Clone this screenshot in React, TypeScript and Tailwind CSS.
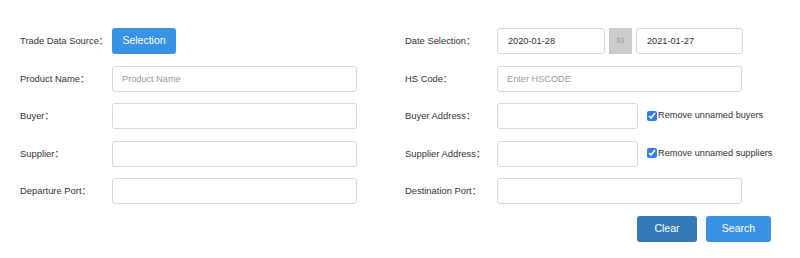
import React from 'react';

const inputCls =
  'h-[26px] rounded-[3px] border border-[#d9d9d9] bg-white px-[9px] text-[9.2px] text-[#333] placeholder:text-[#999] outline-none';

function Label({ text }: { text: string }) {
  return (
    <span className="w-[92px] shrink-0 text-[9.4px] text-[#333]">
      {text}
      <span className="font-['Noto_Sans_CJK_SC',sans-serif]">：</span>
    </span>
  );
}

function Row({ children }: { children: React.ReactNode }) {
  return <div className="flex items-center h-[26px]">{children}</div>;
}

export default function App() {
  return (
    <div className="w-[800px] h-[258px] bg-white pt-[28px] pl-[20px] font-['Liberation_Sans',Arial,sans-serif]">
      <div className="grid grid-cols-[385px_1fr] gap-y-[11.5px]">
        {/* Row 1 */}
        <Row>
          <Label text="Trade Data Source" />
          <button className="h-[26px] w-[64px] rounded-[3px] bg-[#3a92e4] text-[10.5px] text-white">
            Selection
          </button>
        </Row>
        <Row>
          <Label text="Date Selection" />
          <input className={`${inputCls} w-[108px] pl-[10px]`} defaultValue="2020-01-28" />
          <div className="ml-[4px] flex h-[26px] w-[23px] items-center justify-center bg-[#cccccc] text-[9px] text-[#999]">
            to
          </div>
          <input className={`${inputCls} ml-[4px] w-[107px] pl-[10px]`} defaultValue="2021-01-27" />
        </Row>

        {/* Row 2 */}
        <Row>
          <Label text="Product Name" />
          <input className={`${inputCls} w-[245px]`} placeholder="Product Name" />
        </Row>
        <Row>
          <Label text="HS Code" />
          <input className={`${inputCls} w-[245px]`} placeholder="Enter HSCODE" />
        </Row>

        {/* Row 3 */}
        <Row>
          <Label text="Buyer" />
          <input className={`${inputCls} w-[245px]`} />
        </Row>
        <Row>
          <Label text="Buyer Address" />
          <input className={`${inputCls} w-[141px]`} />
          <label className="ml-[9px] flex items-center text-[9.2px] text-[#333]">
            <input type="checkbox" defaultChecked className="m-0 h-[10px] w-[10px] accent-[#2f7ef6]" />
            <span className="ml-[1px]">Remove unnamed buyers</span>
          </label>
        </Row>

        {/* Row 4 */}
        <Row>
          <Label text="Supplier" />
          <input className={`${inputCls} w-[245px]`} />
        </Row>
        <Row>
          <Label text="Supplier Address" />
          <input className={`${inputCls} w-[141px]`} />
          <label className="ml-[9px] flex items-center text-[9.2px] text-[#333]">
            <input type="checkbox" defaultChecked className="m-0 h-[10px] w-[10px] accent-[#2f7ef6]" />
            <span className="ml-[1px]">Remove unnamed suppliers</span>
          </label>
        </Row>

        {/* Row 5 */}
        <Row>
          <Label text="Departure Port" />
          <input className={`${inputCls} w-[245px]`} />
        </Row>
        <Row>
          <Label text="Destination Port" />
          <input className={`${inputCls} w-[245px]`} />
        </Row>
      </div>

      <div className="mt-[11.5px] flex justify-end gap-[9px] pr-[29px]">
        <button className="h-[26px] w-[60px] rounded-[3px] bg-[#3379b7] text-[10.5px] text-white">
          Clear
        </button>
        <button className="h-[26px] w-[65px] rounded-[3px] bg-[#3a92e4] text-[10.5px] text-white">
          Search
        </button>
      </div>
    </div>
  );
}
